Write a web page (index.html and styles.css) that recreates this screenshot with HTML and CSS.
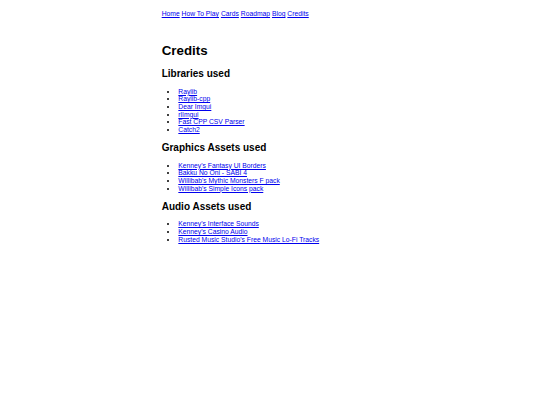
FILE: index.html
```html
<!DOCTYPE html>
<html lang="en">
<head>
<meta charset="utf-8">
<title>Credits</title>
<link rel="stylesheet" href="styles.css">
</head>
<body class="page">
<div class="container">
  <nav class="nav">
    <a href="#">Home</a>
    <a href="#">How To Play</a>
    <a href="#">Cards</a>
    <a href="#">Roadmap</a>
    <a href="#">Blog</a>
    <a href="#">Credits</a>
  </nav>
  <main class="content">
    <h1 class="title">Credits</h1>
    <h2 class="section-title">Libraries used</h2>
    <ul class="list">
      <li><a href="#">Raylib</a></li>
      <li><a href="#">Raylib-cpp</a></li>
      <li><a href="#">Dear Imgui</a></li>
      <li><a href="#">rlImgui</a></li>
      <li><a href="#">Fast CPP CSV Parser</a></li>
      <li><a href="#">Catch2</a></li>
    </ul>
    <h2 class="section-title">Graphics Assets used</h2>
    <ul class="list">
      <li><a href="#">Kenney's Fantasy UI Borders</a></li>
      <li><a href="#">Bakku No Oni - SABI 4</a></li>
      <li><a href="#">Willibab's Mythic Monsters F pack</a></li>
      <li><a href="#">Willibab's Simple Icons pack</a></li>
    </ul>
    <h2 class="section-title">Audio Assets used</h2>
    <ul class="list">
      <li><a href="#">Kenney's Interface Sounds</a></li>
      <li><a href="#">Kenney's Casino Audio</a></li>
      <li><a href="#">Rusted Music Studio's Free Music Lo-Fi Tracks</a></li>
    </ul>
  </main>
</div>
</body>
</html>
```
FILE: styles.css
```css
html {
  background: #ffffff;
}
.page {
  margin: 3.33px;
  font-family: "Liberation Sans", Arial, sans-serif;
  font-size: 6.75px;
  line-height: 7.66px;
  color: #000000;
}
.container {
  max-width: 216.67px;
  margin: 0 auto;
}
.nav {
  margin: 6.67px 0 25px;
}
.nav a,
.list a {
  color: #0000ee;
  text-decoration: underline;
}
.title {
  font-size: 13.33px;
  line-height: 15.33px;
  font-weight: bold;
  margin: 8.93px 0 9.9px;
}
.section-title {
  font-size: 10px;
  line-height: 11.5px;
  font-weight: bold;
  margin: 8.3px 0;
}
.list {
  margin: 6.67px 0;
  padding-left: 16.67px;
  list-style: disc;
}
```
